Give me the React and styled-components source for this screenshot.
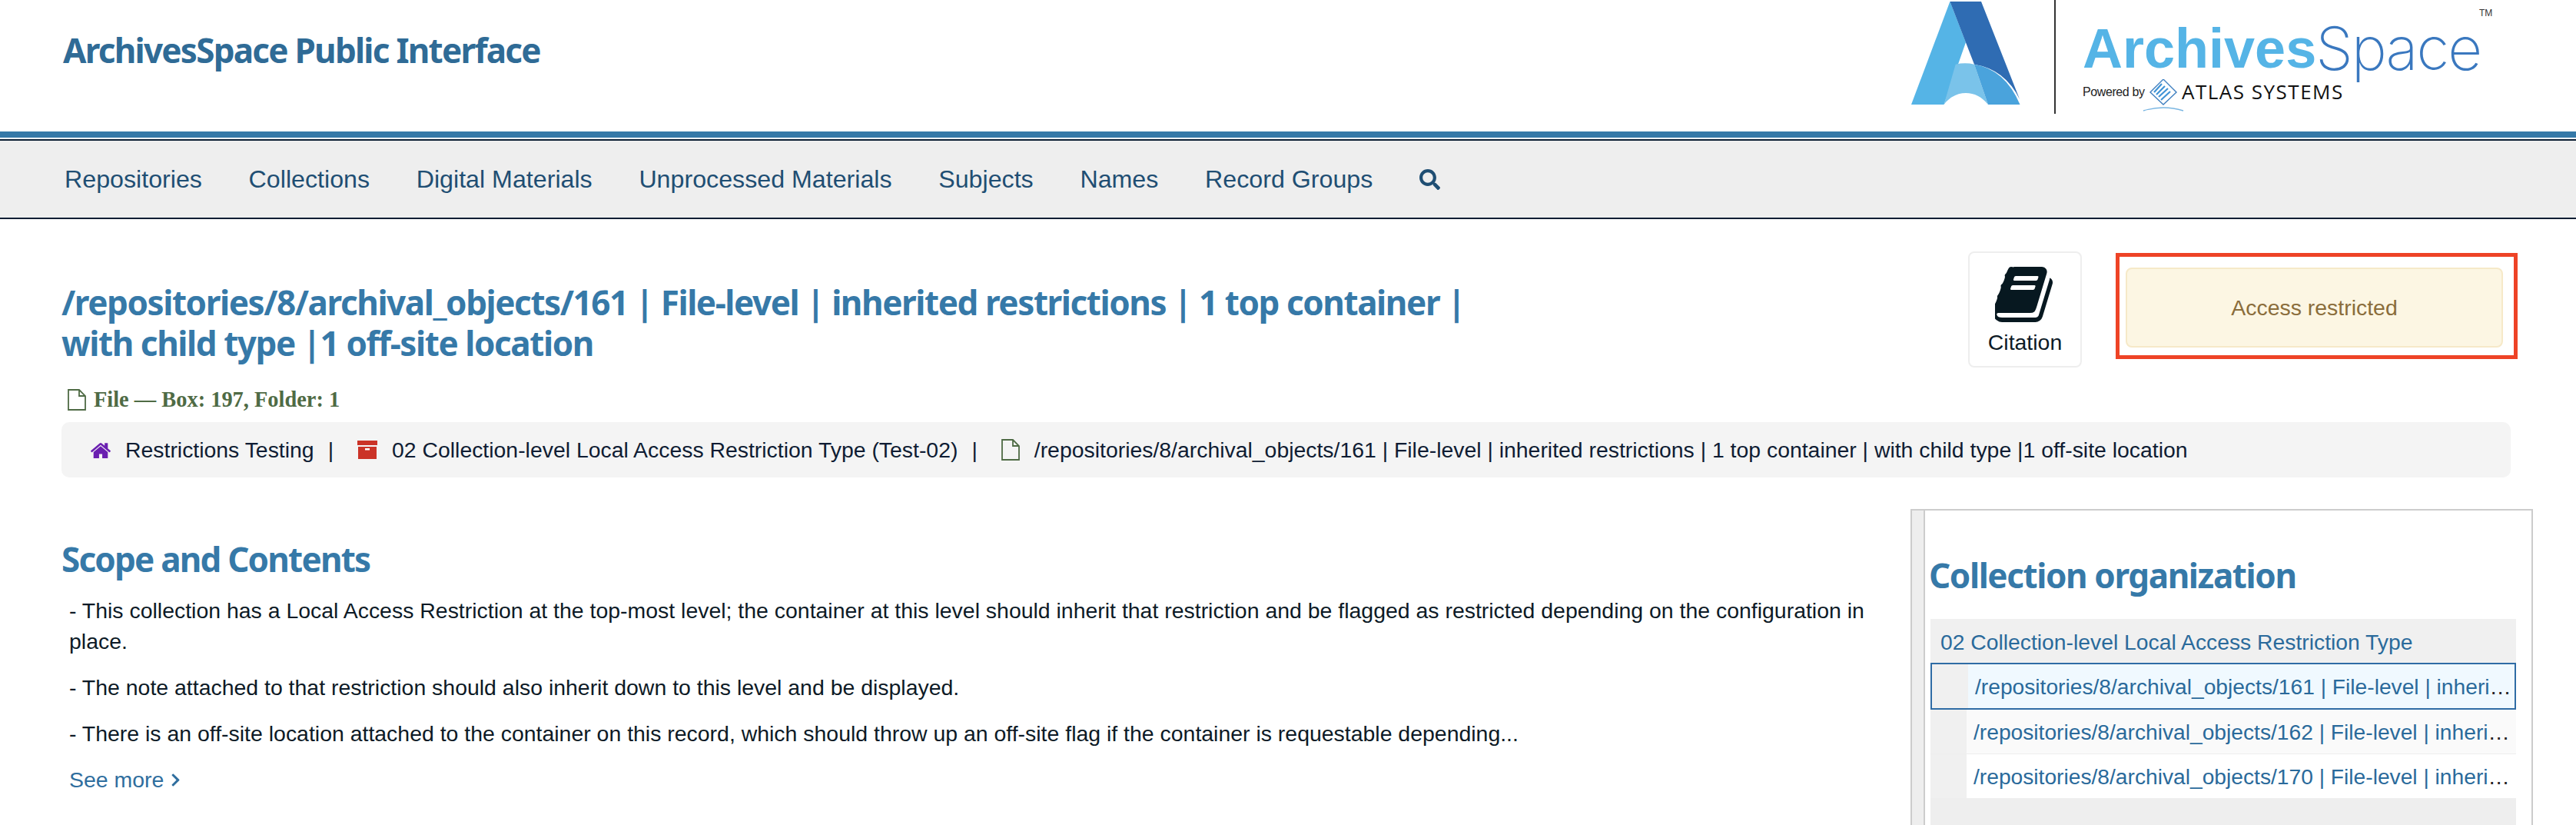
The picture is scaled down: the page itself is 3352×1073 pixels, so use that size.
import styled, { createGlobalStyle } from 'styled-components'
import { FaSearch, FaChevronRight } from 'react-icons/fa'

const GlobalStyle = createGlobalStyle`
  html, body {
    margin: 0;
    padding: 0;
    background: #fff;
    overflow: hidden;
  }
  body {
    font-family: "Liberation Sans", Arial, sans-serif;
    font-size: 28.45px;
    line-height: 40px;
    color: #0d1a26;
  }
`

const navItems = ['Repositories', 'Collections', 'Digital Materials', 'Unprocessed Materials', 'Subjects', 'Names', 'Record Groups']

const treeRows = [
  { id: 161, current: true },
  { id: 162, shaded: true },
  { id: 170 },
]

const longTitle = '/repositories/8/archival_objects/161 | File-level | inherited restrictions | 1 top container | with child type |1 off-site location'

function LogoMark() {
  return (
    <MarkSvg viewBox="0 0 142 134" aria-hidden="true">
      <polygon points="50.4,0 71,53 42.5,134 0,134" fill="#55b4e6" />
      <path d="M50.4 0H91L141 127Q122 88 82 81.7Z" fill="#2f6cb3" />
      <path d="M42.5 134L57.7 81.7Q70 79 82 81.7L100 134C92 124 82 119 71 119C60 119 50 124 42.5 134Z" fill="#7ac3ea" />
      <path d="M82 81.7Q122 88 141.5 134H100Z" fill="#4aa3dc" />
    </MarkSvg>
  )
}

function AtlasMark() {
  return (
    <AtlasSvg viewBox="0 0 54 42" aria-hidden="true">
      <polygon points="27,0 44,17 27,33 10,17" fill="#fff" stroke="#3f7fc0" strokeWidth="1.4" />
      <path d="M15 17L25 6M18 20L29 9M21 23L33 12M24 27L36 16" stroke="#3f93d6" strokeWidth="2.2" />
      <path d="M1 41Q27 33 53 41" fill="none" stroke="#7ab6e2" strokeWidth="1.4" />
    </AtlasSvg>
  )
}

function BookIcon() {
  return (
    <BookSvg viewBox="128 128 1536 1536" aria-hidden="true">
      <path d="M1639 478q40 57 18 129l-275 906q-19 64-76.5 107.5t-122.5 43.5h-923q-77 0-148.5-53.5t-99.5-131.5q-24-67-2-127 0-4 3-27t4-37q1-8-3-21.5t-3-19.5q2-11 8-21t16.5-23.5 16.5-23.5q23-38 45-91.5t30-91.5q3-10 .5-30t-.5-28q3-11 17-28t17-23q21-36 42-92t25-90q1-9-2.5-32t.5-28q4-13 22-30.5t22-22.5q19-26 42.5-84.5t27.5-96.5q1-8-3-25.5t-2-26.5q2-8 9-18t18-23 17-21q8-12 16.5-30.5t15-35 16-36 19.5-32 26.5-23.5 36-11.5 47.5 5.5l-1 3q38-9 51-9h761q74 0 114 56t18 130l-274 906q-36 119-71.5 153.5t-128.5 34.5h-869q-27 0-38 15-11 16-1 43 24 70 144 70h923q29 0 56-15.5t35-41.5l300-987q7-22 5-57 38 15 59 43zm-1064 2q-4 13 2 22.5t20 9.5h608q13 0 25.5-9.5t16.5-22.5l21-64q4-13-2-22.5t-20-9.5h-608q-13 0-25.5 9.5t-16.5 22.5zm-83 256q-4 13 2 22.5t20 9.5h608q13 0 25.5-9.5t16.5-22.5l21-64q4-13-2-22.5t-20-9.5h-608q-13 0-25.5 9.5t-16.5 22.5z" fill="#071820" />
    </BookSvg>
  )
}

function HomeIcon() {
  return (
    <SmallIcon viewBox="90 190 1612 1230" aria-hidden="true">
      <path d="M1472 992v480q0 26-19 45t-45 19h-384v-384h-256v384h-384q-26 0-45-19t-19-45v-480q0-1 .5-3t.5-3l575-474 575 474q1 2 1 6zm223-69l-62 74q-8 9-21 11h-3q-13 0-21-7l-692-577-692 577q-12 8-24 7-13-2-21-11l-62-74q-8-10-7-23.5t11-21.5l719-599q32-26 76-26t76 26l244 204v-195q0-14 9-23t23-9h192q14 0 23 9t9 23v408l219 182q10 8 11 21.5t-7 23.5z" fill="#6a1fb0" />
    </SmallIcon>
  )
}

function BoxIcon() {
  return (
    <BoxSvg viewBox="0 0 26 24" aria-hidden="true">
      <rect x="0" y="0" width="26" height="6" fill="#cb3327" />
      <rect x="1" y="8" width="24" height="16" fill="#cb3327" />
      <rect x="10" y="10" width="6" height="2.5" fill="#fff" />
    </BoxSvg>
  )
}

function FileIcon() {
  return (
    <FileSvg viewBox="0 0 24 28" aria-hidden="true">
      <path d="M1 1H15L23 9V27H1Z M15 1V9H23" fill="none" stroke="#4f6b45" strokeWidth="1.8" />
    </FileSvg>
  )
}

function App() {
  return (
    <Page>
      <GlobalStyle />
      <Header>
        <SiteTitle>ArchivesSpace Public Interface</SiteTitle>
        <Logo>
          <LogoMark />
          <LogoDivider />
          <LogoText>
            <Trademark>TM</Trademark>
            <Wordmark>
              <WordBold>Archives</WordBold>
              <WordLight>Space</WordLight>
            </Wordmark>
            <PoweredRow>
              <PoweredBy>Powered by</PoweredBy>
              <AtlasMark />
              <AtlasName>ATLAS SYSTEMS</AtlasName>
            </PoweredRow>
          </LogoText>
        </Logo>
      </Header>

      <Nav>
        {navItems.map(item => <NavLink key={item}>{item}</NavLink>)}
        <NavLink><FaSearch size={27} /></NavLink>
      </Nav>

      <Main>
        <TopRow>
          <TitleBlock>
            <RecordTitle>{longTitle}</RecordTitle>
          </TitleBlock>
          <Actions>
            <CitationCard>
              <BookIcon />
              <span>Citation</span>
            </CitationCard>
            <RedBox>
              <Alert>Access restricted</Alert>
            </RedBox>
          </Actions>
        </TopRow>

        <RecordType>
          <FileIcon />
          <span>File — Box: 197, Folder: 1</span>
        </RecordType>

        <Breadcrumb>
          <Crumb>
            <HomeIcon />
            <span>Restrictions Testing</span>
          </Crumb>
          <Sep>|</Sep>
          <Crumb>
            <BoxIcon />
            <span>02 Collection-level Local Access Restriction Type (Test-02)</span>
          </Crumb>
          <Sep>|</Sep>
          <Crumb>
            <FileIcon />
            <span>{longTitle}</span>
          </Crumb>
        </Breadcrumb>

        <Columns>
          <Content>
            <SectionTitle>Scope and Contents</SectionTitle>
            <Notes>
              <p>- This collection has a Local Access Restriction at the top-most level; the container at this level should inherit that restriction and be flagged as restricted depending on the configuration in place.</p>
              <p>- The note attached to that restriction should also inherit down to this level and be displayed.</p>
              <p>- There is an off-site location attached to the container on this record, which should throw up an off-site flag if the container is requestable depending...</p>
              <SeeMore>See more <FaChevronRight size={19} /></SeeMore>
            </Notes>
          </Content>

          <Sidebar>
            <Handle />
            <SidebarBody>
              <TreeTitle>Collection organization</TreeTitle>
              <Tree>
                <TreeRoot>02 Collection-level Local Access Restriction Type</TreeRoot>
                {treeRows.map(row => (
                  <TreeRow key={row.id} $current={row.current} $shaded={row.shaded}>
                    <Indent />
                    <TreeLink>
                      <LinkText>/repositories/8/archival_objects/{row.id} | File-level | inherited restrictions | 1 top container</LinkText>
                    </TreeLink>
                  </TreeRow>
                ))}
              </Tree>
            </SidebarBody>
          </Sidebar>
        </Columns>
      </Main>
    </Page>
  )
}

const headingFont = `"Noto Sans", "Open Sans", sans-serif`

const Page = styled.div`
  height: 1073px;
  overflow: hidden;
`

const Header = styled.header`
  height: 171px;
  display: flex;
  justify-content: space-between;
  align-items: flex-start;
  padding: 0 110px 0 82px;
  border-bottom: 8px solid #3679a8;
`

const SiteTitle = styled.div`
  font-family: ${headingFont};
  font-weight: 700;
  font-size: 44px;
  letter-spacing: -1.75px;
  line-height: 60px;
  color: #2f6b96;
  margin-top: 35px;
`

const Logo = styled.div`
  display: flex;
  align-items: flex-start;
`

const MarkSvg = styled.svg`
  width: 142px;
  height: 134px;
  margin-top: 2px;
`

const LogoDivider = styled.div`
  width: 2px;
  height: 148px;
  background: #333;
  margin: 0 35px 0 44px;
`

const LogoText = styled.div`
  position: relative;
  width: 532px;
`

const Trademark = styled.div`
  position: absolute;
  top: 9px;
  left: 516px;
  font-size: 12px;
  line-height: 16px;
  color: #333;
`

const Wordmark = styled.div`
  display: flex;
  line-height: 80px;
  margin-top: 23px;
  white-space: nowrap;
`

const WordBold = styled.span`
  font-size: 72px;
  font-weight: 700;
  color: #55b4e6;
`

const WordLight = styled.span`
  font-family: Inter, sans-serif;
  font-size: 78px;
  font-weight: 200;
  letter-spacing: -2px;
  color: #3a78bf;
  margin-left: -1px;
`

const PoweredRow = styled.div`
  display: flex;
  align-items: flex-start;
`

const PoweredBy = styled.span`
  font-size: 16px;
  line-height: 20px;
  color: #222;
  margin-top: 7px;
  letter-spacing: -0.4px;
  width: 78px;
  white-space: nowrap;
`

const AtlasSvg = styled.svg`
  width: 54px;
  height: 42px;
`

const AtlasName = styled.span`
  font-family: "Open Sans", sans-serif;
  font-size: 26px;
  line-height: 30px;
  letter-spacing: 1.5px;
  color: #111;
  margin-left: -3px;
  margin-top: 1px;
  white-space: nowrap;
`

const Nav = styled.nav`
  height: 100px;
  margin-top: 2px;
  display: flex;
  align-items: center;
  gap: 60.7px;
  padding-left: 84px;
  background: #eee;
  border-top: 2px solid #0b1e33;
  border-bottom: 2px solid #0b1e33;
`

const NavLink = styled.a`
  font-size: 32.2px;
  line-height: 40px;
  color: #1f4e73;
  display: flex;
  align-items: center;
`

const Main = styled.main`
  padding: 42px 0 0 80px;
`

const TopRow = styled.div`
  display: flex;
  justify-content: space-between;
  align-items: flex-start;
  padding-right: 76px;
`

const TitleBlock = styled.div`
  width: 1880px;
  padding-top: 40px;
`

const RecordTitle = styled.h1`
  margin: 0;
  font-family: ${headingFont};
  font-weight: 700;
  font-size: 44px;
  letter-spacing: -1.42px;
  line-height: 53px;
  color: #3679a8;
`

const Actions = styled.div`
  display: flex;
  align-items: flex-start;
  gap: 44px;
`

const CitationCard = styled.div`
  width: 148px;
  height: 151px;
  box-sizing: border-box;
  border: 2px solid #eee;
  border-radius: 8px;
  display: flex;
  flex-direction: column;
  align-items: center;
  padding-top: 18px;
  gap: 6px;
`

const BookSvg = styled.svg`
  width: 78px;
  height: 72px;
`

const RedBox = styled.div`
  width: 523px;
  height: 138px;
  box-sizing: border-box;
  margin-top: 2px;
  border: 5px solid #ee4326;
  padding: 14px 14px 10px 8px;
`

const Alert = styled.div`
  height: 100%;
  box-sizing: border-box;
  display: flex;
  align-items: center;
  justify-content: center;
  background: #fcf6e3;
  border: 2px solid #f6e9c8;
  border-radius: 8px;
  color: #8a6d3b;
`

const RecordType = styled.div`
  display: flex;
  align-items: center;
  gap: 10px;
  margin-top: 22px;
  padding-left: 8px;
  height: 40px;
  font-family: "Liberation Serif", serif;
  font-size: 28.4px;
  font-weight: 700;
  color: #4f6b45;
`

const Breadcrumb = styled.div`
  margin: 9px 85px 0 0;
  height: 72px;
  box-sizing: border-box;
  display: flex;
  align-items: center;
  padding-left: 38px;
  background: #f4f4f4;
  border-radius: 10px;
  white-space: nowrap;
  font-size: 28.4px;
  color: #0f1c33;
`

const Crumb = styled.div`
  display: flex;
  align-items: center;
  gap: 19px;
`

const Sep = styled.span`
  margin: 0 31px 0 18px;
`

const SmallIcon = styled.svg`
  width: 26px;
  height: 22px;
`

const BoxSvg = styled.svg`
  width: 26px;
  height: 24px;
`

const FileSvg = styled.svg`
  width: 24px;
  height: 28px;
`

const Columns = styled.div`
  display: flex;
  align-items: flex-start;
  margin-top: 41px;
  padding-right: 56px;
`

const Content = styled.section`
  flex: 1;
  min-width: 0;
  padding: 40px 30px 0 0;
`

const SectionTitle = styled.h2`
  margin: 0;
  font-family: ${headingFont};
  font-weight: 700;
  font-size: 44px;
  letter-spacing: -1.8px;
  line-height: 50px;
  color: #3679a8;
`

const Notes = styled.div`
  padding: 22px 0 0 10px;
  p {
    margin: 0 0 20px;
  }
`

const SeeMore = styled.a`
  display: inline-flex;
  align-items: center;
  gap: 6px;
  color: #2f6e9e;
`

const Sidebar = styled.aside`
  width: 810px;
  height: 500px;
  flex: none;
  box-sizing: border-box;
  display: flex;
  border: 2px solid #ccc;
`

const Handle = styled.div`
  width: 15px;
  background: #eee;
  border-right: 2px solid #ccc;
`

const SidebarBody = styled.div`
  flex: 1;
  min-width: 0;
  padding: 0 20px 0 7px;
`

const TreeTitle = styled.h2`
  margin: 58px 0 0 -2px;
  font-family: ${headingFont};
  font-weight: 700;
  font-size: 44px;
  letter-spacing: -1.4px;
  line-height: 52px;
  color: #3679a8;
`

const Tree = styled.div`
  margin-top: 31px;
  background: #eee;
  height: 400px;
`

const TreeRoot = styled.div`
  height: 57px;
  padding: 10px 0 0 13px;
  box-sizing: border-box;
  background: #f0f0f0;
  font-size: 28.3px;
  color: #2a6a9b;
  white-space: nowrap;
`

const TreeRow = styled.div`
  display: flex;
  height: ${props => (props.$current ? '61px' : '57px')};
  margin-bottom: ${props => (props.$current ? '0' : '1px')};
  box-sizing: border-box;
  background: ${props => (props.$current ? '#f0f9ff' : props.$shaded ? '#fafafa' : '#fff')};
  border: ${props => (props.$current ? '2px solid #2f6ca5' : 'none')};
`

const Indent = styled.div`
  width: 47px;
  flex: none;
  background: #f0f0f0;
`

const TreeLink = styled.div`
  flex: 1;
  min-width: 0;
  padding: 0 1px 0 9px;
  align-self: center;
  overflow: hidden;
  white-space: nowrap;
  text-overflow: ellipsis;
  font-size: 28.2px;
  color: #222;
`

const LinkText = styled.a`
  color: #2a6a9b;
`

export default App
